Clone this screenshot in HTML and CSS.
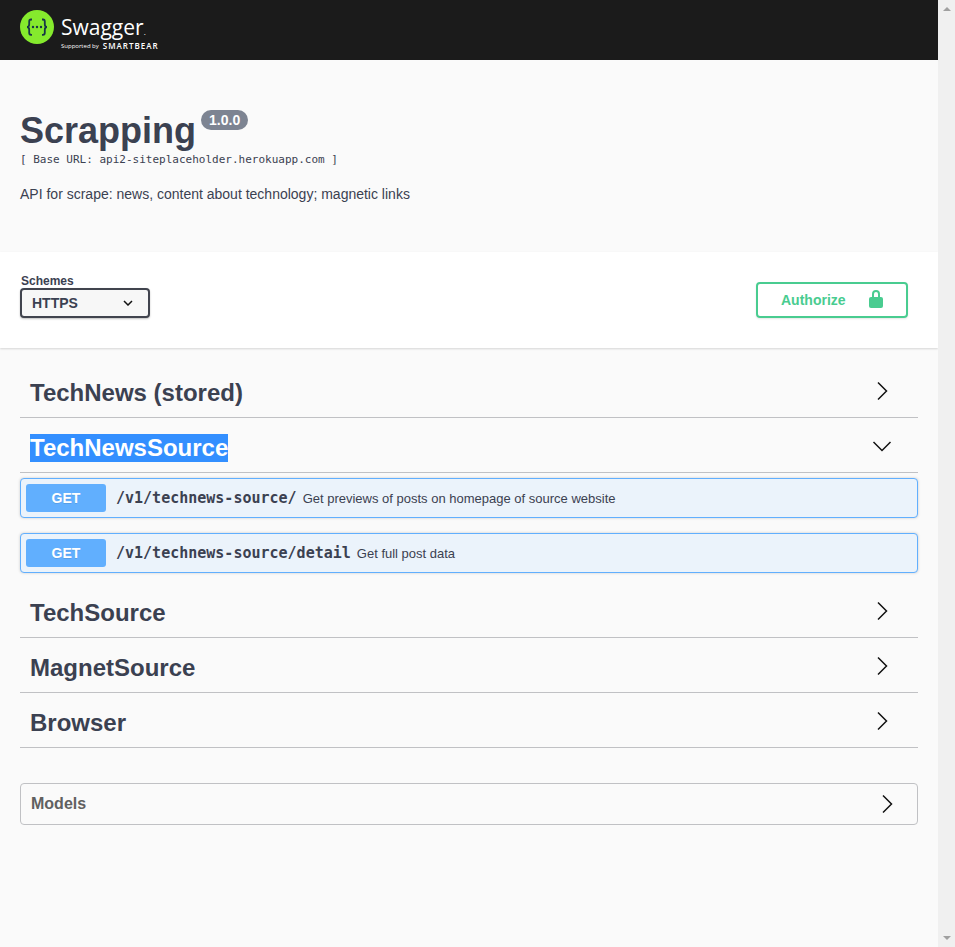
FILE: index.html
```html
<!DOCTYPE html>
<html lang="en">
<head>
<meta charset="utf-8">
<title>Swagger UI</title>
<link rel="stylesheet" href="styles.css">
</head>
<body>
<div class="page">
  <header class="topbar">
    <a class="brand" href="#" aria-label="Swagger, supported by SmartBear">
      <svg class="brand-mark" viewBox="0 0 34 34" aria-hidden="true">
        <circle cx="17" cy="17" r="17" fill="#85ea2d"/>
        <g fill="none" stroke="#173647" stroke-width="1.800">
          <path d="M12 9.500h-1q-1.800 0-1.800 2v2.700q0 2.800-2.200 2.800q2.200 0 2.200 2.800v3q0 2 1.800 2h1"/>
          <path d="M22 9.500h1q1.800 0 1.800 2v2.700q0 2.800 2.200 2.800q-2.200 0-2.200 2.800v3q0 2-1.800 2h-1"/>
        </g>
        <g fill="#173647"><circle cx="13" cy="17" r="1.200"/><circle cx="17" cy="17" r="1.200"/><circle cx="21" cy="17" r="1.200"/></g>
      </svg>
      <span class="brand-text">
        <span class="brand-name">Swagger<span class="brand-dot">.</span></span>
        <span class="brand-sub"><span>Supported by</span> <b>SMARTBEAR</b></span>
      </span>
    </a>
  </header>

  <main>
    <section class="info">
      <div class="title-row">
        <h1 class="title">Scrapping</h1>
        <span class="version">1.0.0</span>
      </div>
      <p class="base-url">[ Base URL: api2-siteplaceholder.herokuapp.com ]</p>
      <p class="description">API for scrape: news, content about technology; magnetic links</p>
    </section>

    <section class="schemes">
      <div class="scheme-field">
        <label for="scheme">Schemes</label>
        <div class="select-wrap">
          <select id="scheme"><option>HTTPS</option></select>
          <svg class="select-arrow" viewBox="0 0 10 6" aria-hidden="true"><path d="M1 1l4 4 4-4"/></svg>
        </div>
      </div>
      <button class="authorize" type="button">
        <span>Authorize</span>
        <svg class="lock" viewBox="0 0 14 18" aria-hidden="true">
          <path d="M4 8V4a3 3 0 0 1 6 0V8" fill="none" stroke="currentColor" stroke-width="2"/>
          <rect y="7" width="14" height="11" rx="2" fill="currentColor"/>
        </svg>
      </button>
    </section>

    <section class="tags">
      <div class="tag">
        <h2>TechNews (stored)</h2>
        <button class="toggle" type="button" aria-label="Expand TechNews (stored)"><svg class="chevron" viewBox="0 0 20 20"><path d="M6 1.500l8.500 8.500L6 18.500"/></svg></button>
      </div>
      <div class="tag">
        <h2><mark>TechNewsSource</mark></h2>
        <button class="toggle" type="button" aria-label="Collapse TechNewsSource"><svg class="chevron" viewBox="0 0 20 20"><path d="M1.500 6l8.500 8.500L18.500 6"/></svg></button>
      </div>
      <div class="operation">
        <span class="method">GET</span>
        <a class="path" href="#">/v1/technews-source/</a>
        <span class="summary">Get previews of posts on homepage of source website</span>
      </div>
      <div class="operation">
        <span class="method">GET</span>
        <a class="path" href="#">/v1/technews-source/detail</a>
        <span class="summary">Get full post data</span>
      </div>
      <div class="tag">
        <h2>TechSource</h2>
        <button class="toggle" type="button" aria-label="Expand TechSource"><svg class="chevron" viewBox="0 0 20 20"><path d="M6 1.500l8.500 8.500L6 18.500"/></svg></button>
      </div>
      <div class="tag">
        <h2>MagnetSource</h2>
        <button class="toggle" type="button" aria-label="Expand MagnetSource"><svg class="chevron" viewBox="0 0 20 20"><path d="M6 1.500l8.500 8.500L6 18.500"/></svg></button>
      </div>
      <div class="tag">
        <h2>Browser</h2>
        <button class="toggle" type="button" aria-label="Expand Browser"><svg class="chevron" viewBox="0 0 20 20"><path d="M6 1.500l8.500 8.500L6 18.500"/></svg></button>
      </div>
    </section>

    <section class="models">
      <h3>Models</h3>
      <button class="toggle" type="button" aria-label="Expand Models"><svg class="chevron" viewBox="0 0 20 20"><path d="M6 1.500l8.500 8.500L6 18.500"/></svg></button>
    </section>
  </main>
</div>
<div class="scrollbar" aria-hidden="true">
  <svg viewBox="0 0 8 4"><path d="M0 4l4-4 4 4z"/></svg>
  <svg viewBox="0 0 8 4"><path d="M0 0l4 4 4-4z"/></svg>
</div>
</body>
</html>
```
FILE: styles.css
```css
* {
  box-sizing: border-box;
}

body {
  margin: 0;
  min-height: 100vh;
  display: grid;
  grid-template-columns: 1fr 17px;
  background: #fafafa;
  color: #3b4151;
  font-family: "Liberation Sans", Arial, sans-serif;
}

h1, h2, h3, p {
  margin: 0;
}

button {
  font: inherit;
  cursor: pointer;
}

.topbar {
  height: 60px;
  padding: 10px 20px;
  background: #1b1b1b;
}

.brand {
  display: inline-flex;
  gap: 7px;
  color: #fff;
  text-decoration: none;
  font-family: "Open Sans", sans-serif;
}

.brand-mark {
  width: 34px;
  height: 34px;
}

.brand-text {
  display: flex;
  flex-direction: column;
  padding-top: 3px;
}

.brand-name {
  font-size: 21px;
  font-weight: 400;
  line-height: 28px;
}

.brand-dot {
  font-size: 8px;
  line-height: 1;
}

.brand-sub {
  display: flex;
  align-items: center;
  gap: 4px;
  font-size: 6px;
  line-height: 10px;
}

.brand-sub b {
  font-size: 8px;
  font-weight: 600;
  letter-spacing: 1px;
}

.info {
  padding: 50px 20px;
}

.title-row {
  display: flex;
  align-items: flex-start;
  gap: 5px;
}

.title {
  font-size: 36px;
  line-height: 42px;
}

.version {
  padding: 2px 8px;
  border-radius: 20px;
  background: #7d8492;
  color: #fff;
  font-size: 14px;
  font-weight: 700;
  line-height: 16px;
}

.base-url {
  font-family: "DejaVu Sans Mono", monospace;
  font-size: 11px;
  line-height: 16px;
}

.description {
  margin-top: 18px;
  font-size: 14px;
  line-height: 16px;
}

.schemes {
  display: flex;
  align-items: flex-end;
  justify-content: space-between;
  padding: 22px 30px 30px 20px;
  background: #fff;
  box-shadow: 0 1px 2px rgba(0, 0, 0, 0.15);
}

.scheme-field label {
  display: block;
  padding-left: 1px;
  font-size: 12px;
  font-weight: 700;
  line-height: 14px;
}

.select-wrap {
  display: grid;
  align-items: center;
  width: 130px;
}

.select-wrap > * {
  grid-area: 1 / 1;
}

.select-wrap select {
  height: 30px;
  padding: 0 10px;
  border: 2px solid #41444e;
  border-radius: 4px;
  background: #f7f7f7;
  box-shadow: 0 1px 2px rgba(0, 0, 0, 0.25);
  color: #3b4151;
  font-family: inherit;
  font-size: 14px;
  font-weight: 700;
  appearance: none;
}

.select-arrow {
  justify-self: end;
  width: 10px;
  height: 6px;
  margin-right: 17px;
  fill: none;
  stroke: #111;
  stroke-width: 1.5;
  pointer-events: none;
}

.authorize {
  display: flex;
  align-items: center;
  justify-content: space-between;
  width: 152px;
  height: 36px;
  padding: 0 23px;
  border: 2px solid #49cc90;
  border-radius: 4px;
  background: transparent;
  box-shadow: 0 1px 2px rgba(0, 0, 0, 0.1);
  color: #49cc90;
  font-size: 14px;
  font-weight: 700;
}

.lock {
  width: 14px;
  height: 18px;
  margin-bottom: 2px;
}

.tags {
  padding: 20px 20px 30px;
}

.tag {
  display: flex;
  align-items: center;
  justify-content: space-between;
  height: 50px;
  margin-bottom: 5px;
  padding: 0 26px 0 10px;
  border-bottom: 1px solid #c0c1c4;
}

.tag h2 {
  font-size: 24px;
  line-height: 28px;
}

.tag mark {
  display: block;
  background: #338fff;
  color: #fff;
}

.toggle {
  display: flex;
  padding: 0;
  border: 0;
  background: none;
}

.tag .toggle {
  padding-bottom: 3px;
}

.chevron {
  width: 20px;
  height: 20px;
  fill: none;
  stroke: #111;
  stroke-width: 1.5;
}

.operation {
  display: flex;
  align-items: center;
  height: 40px;
  margin-bottom: 15px;
  padding: 5px;
  border: 1px solid #61affe;
  border-radius: 4px;
  background: #ebf3fb;
  box-shadow: 0 0 3px rgba(0, 0, 0, 0.19);
}

.method {
  width: 80px;
  border-radius: 3px;
  background: #61affe;
  color: #fff;
  font-size: 14px;
  font-weight: 700;
  line-height: 28px;
  text-align: center;
  text-shadow: 0 1px 0 rgba(0, 0, 0, 0.1);
}

.path {
  padding: 0 6px 0 10px;
  color: #3b4151;
  font-family: "DejaVu Sans Mono", monospace;
  font-size: 15px;
  font-weight: 700;
  text-decoration: none;
}

.summary {
  font-size: 13px;
}

.models {
  display: flex;
  align-items: center;
  justify-content: space-between;
  height: 42px;
  margin: 0 20px 30px;
  padding: 0 20px 0 10px;
  border: 1px solid #c0c1c4;
  border-radius: 4px;
}

.models h3 {
  color: #606060;
  font-size: 16px;
}

.scrollbar {
  display: flex;
  flex-direction: column;
  align-items: center;
  justify-content: space-between;
  padding: 7px 0;
  background: #f0f0f0;
}

.scrollbar svg {
  width: 8px;
  height: 4px;
  fill: #a0a0a0;
}
```
